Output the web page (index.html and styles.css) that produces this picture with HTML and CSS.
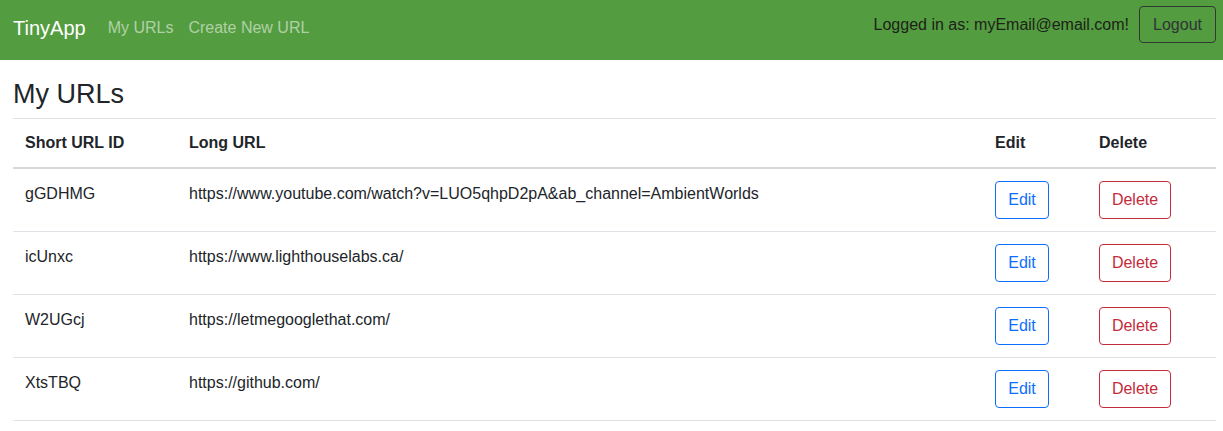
FILE: index.html
```html
<!DOCTYPE html>
<html lang="en">
<head>
<meta charset="utf-8">
<title>TinyApp - My URLs</title>
<link rel="stylesheet" href="styles.css">
</head>
<body>
<nav class="navbar">
  <div class="nav-left">
    <a class="brand" href="#">TinyApp</a>
    <a class="nav-link" href="#">My URLs</a>
    <a class="nav-link" href="#">Create New URL</a>
  </div>
  <div class="nav-right">
    <span class="login-text">Logged in as: myEmail@email.com!</span>
    <button class="btn btn-dark">Logout</button>
  </div>
</nav>
<main class="content">
  <h3 class="title">My URLs</h3>
  <table class="url-table">
    <colgroup>
      <col class="c-short">
      <col class="c-long">
      <col class="c-edit">
      <col class="c-delete">
    </colgroup>
    <thead>
      <tr><th>Short URL ID</th><th>Long URL</th><th>Edit</th><th>Delete</th></tr>
    </thead>
    <tbody>
      <tr><td>gGDHMG</td><td>https://www.youtube.com/watch?v=LUO5qhpD2pA&amp;ab_channel=AmbientWorlds</td><td><button class="btn btn-edit">Edit</button></td><td><button class="btn btn-delete">Delete</button></td></tr>
      <tr><td>icUnxc</td><td>https://www.lighthouselabs.ca/</td><td><button class="btn btn-edit">Edit</button></td><td><button class="btn btn-delete">Delete</button></td></tr>
      <tr><td>W2UGcj</td><td>https://letmegooglethat.com/</td><td><button class="btn btn-edit">Edit</button></td><td><button class="btn btn-delete">Delete</button></td></tr>
      <tr><td>XtsTBQ</td><td>https://github.com/</td><td><button class="btn btn-edit">Edit</button></td><td><button class="btn btn-delete">Delete</button></td></tr>
    </tbody>
  </table>
</main>
</body>
</html>
```
FILE: styles.css
```css
* { box-sizing: border-box; }
html, body { margin: 0; padding: 0; }
body {
  font-family: "Liberation Sans", Arial, sans-serif;
  font-size: 16px;
  line-height: 24px;
  color: #212529;
  background: #fff;
}
.navbar {
  height: 60px;
  background: #539c40;
  display: flex;
  justify-content: space-between;
  align-items: flex-start;
  padding: 0 7px 0 13px;
}
.nav-left {
  display: flex;
  align-items: center;
  margin-top: 13px;
}
.brand {
  font-size: 20px;
  line-height: 30px;
  color: #fff;
  text-decoration: none;
  margin-right: 22px;
}
.nav-link {
  color: rgba(255, 255, 255, 0.55);
  text-decoration: none;
  margin-right: 15px;
}
.nav-right {
  display: flex;
  align-items: center;
  margin-top: 6px;
}
.login-text {
  color: #1d2319;
  margin-right: 10px;
}
.btn {
  display: inline-block;
  vertical-align: top;
  font-family: inherit;
  font-size: 16px;
  line-height: 24px;
  height: 38px;
  padding: 6px 12px;
  border-radius: 4px;
  background: transparent;
  border: 1px solid;
  cursor: pointer;
}
.btn-dark {
  border-color: #2f3a31;
  color: #2f3535;
  width: 77px;
  height: 37px;
  padding: 5px 0;
}
.btn-edit { border-color: #0d6efd; color: #0d6efd; width: 54px; padding: 6px 0; }
.btn-delete { border-color: #c42b3b; color: #c42b3b; width: 72px; padding: 6px 0; }
.content {
  padding: 18px 7px 0 13px;
}
.title {
  font-size: 27px;
  font-weight: 500;
  line-height: 32px;
  margin: 0 0 8px 0;
}
.url-table {
  width: 100%;
  border-collapse: collapse;
  table-layout: fixed;
}
.c-short { width: 164px; }
.c-long { width: auto; }
.c-edit { width: 104px; }
.c-delete { width: 129px; }
.url-table th, .url-table td {
  text-align: left;
  vertical-align: top;
  line-height: 26px;
  padding: 12px 12px;
  border-bottom: 1px solid #dee2e6;
}
.url-table thead tr { border-top: 1px solid #dee2e6; }
.url-table th {
  font-weight: 700;
  padding: 11px 12px;
  border-bottom: 2px solid #d6d9dc;
}
```
